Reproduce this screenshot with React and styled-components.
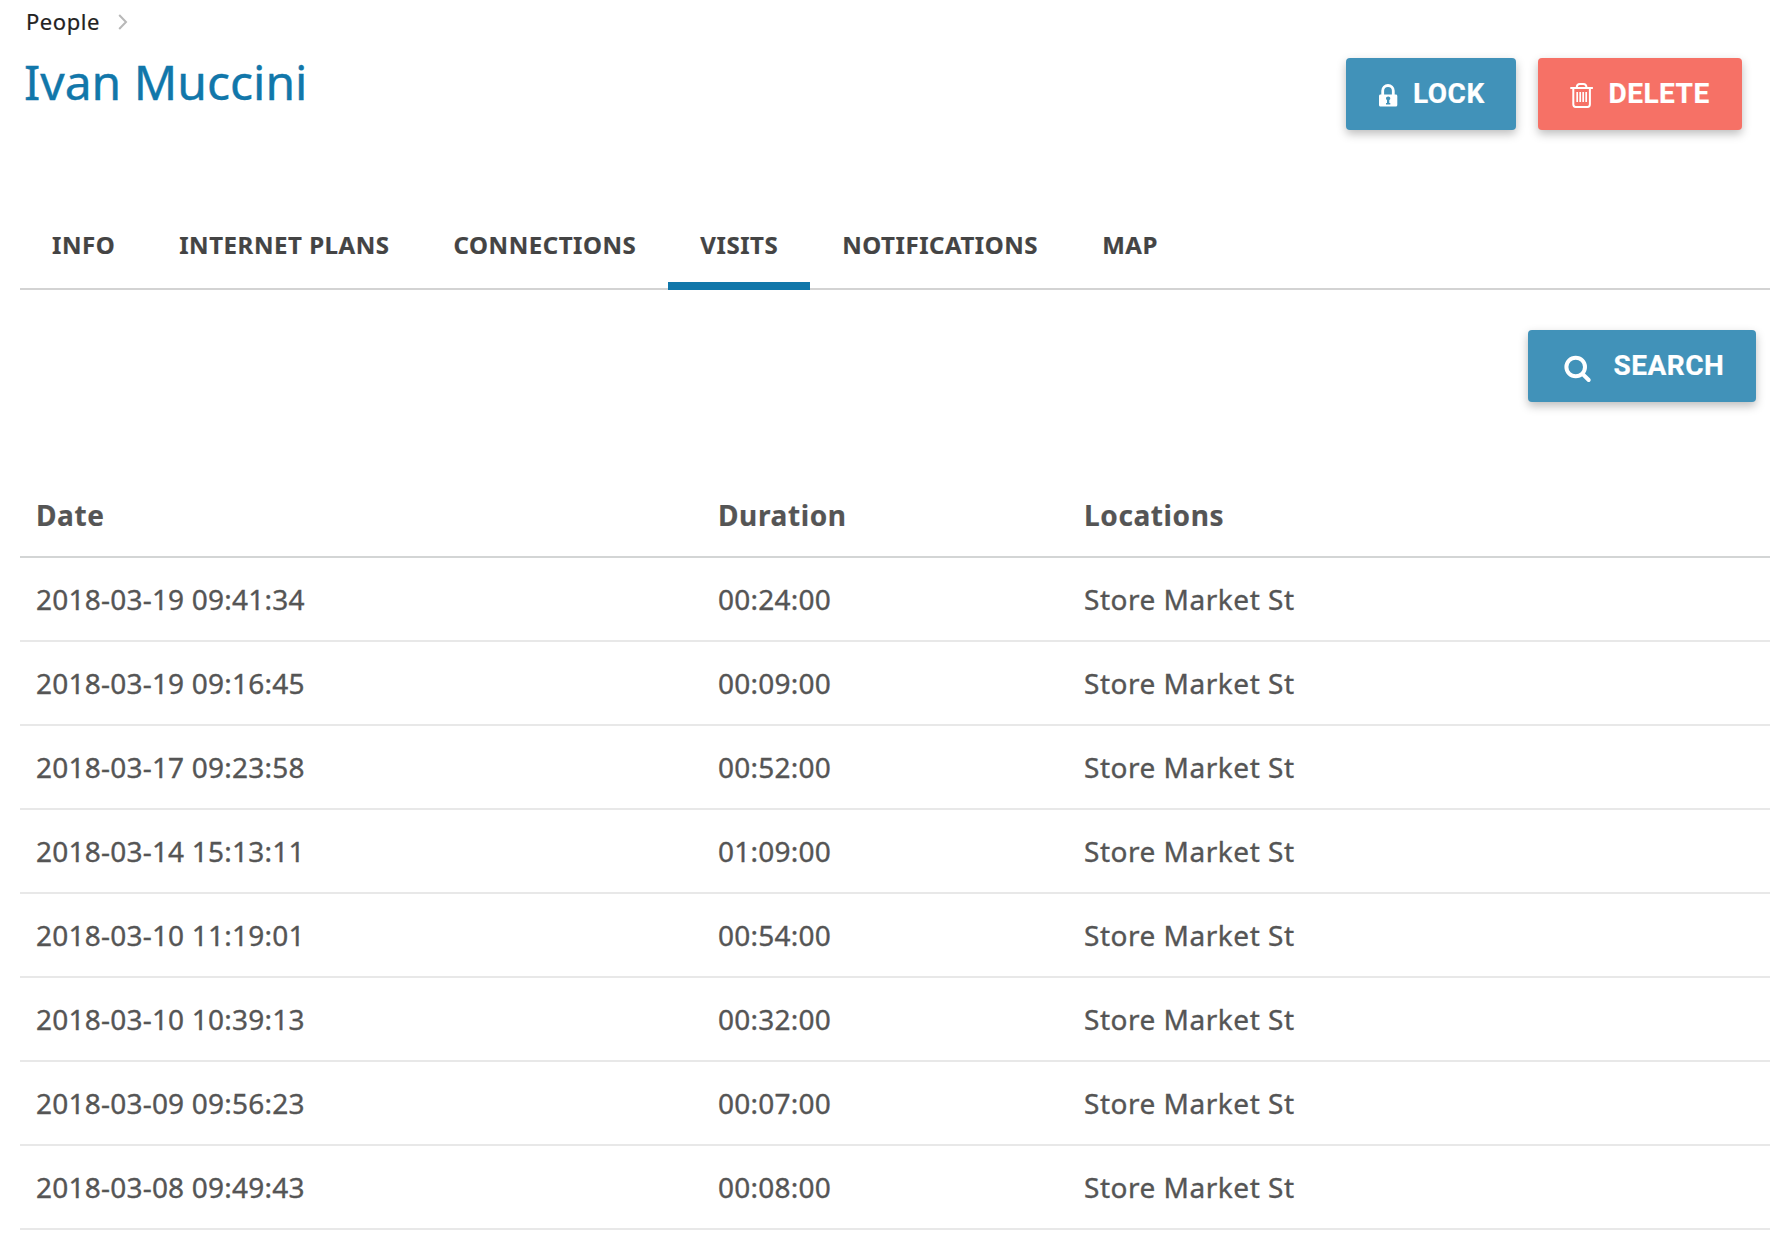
import React from "react";
import styled, { createGlobalStyle } from "styled-components";

const GlobalStyle = createGlobalStyle`
  *, *::before, *::after { box-sizing: border-box; }
  body {
    margin: 0;
    background: #fff;
    color: #555;
    font-family: "Noto Sans", "Open Sans", sans-serif;
  }
`;

const Page = styled.main`
  width: 1788px;
  height: 1240px;
  padding: 0 18px 0 20px;
  overflow: hidden;
  background: #fff;
`;

const Header = styled.header`
  display: flex;
  justify-content: space-between;
  align-items: flex-start;
  height: 206px;
  padding: 0 28px 0 4px;
`;

const Breadcrumb = styled.nav`
  display: flex;
  align-items: center;
  gap: 18px;
  height: 44px;
`;

const Crumb = styled.a`
  color: #222;
  font-size: 22px;
  line-height: 42px;
  height: 44px;
  letter-spacing: 0.55px;
  padding-left: 2px;
  text-decoration: none;
  -webkit-text-stroke: 0.2px;
`;

const Title = styled.h1`
  margin: 4px 0 0;
  color: #1177aa;
  font-size: 48px;
  font-weight: 400;
  line-height: 68px;
  -webkit-text-stroke: 0.4px;
`;

const Actions = styled.div`
  display: flex;
  gap: 22px;
  padding-top: 58px;
`;

const Button = styled.button`
  display: flex;
  align-items: center;
  gap: ${(p) => p.$gap}px;
  width: ${(p) => p.$width}px;
  height: 72px;
  padding: 0 0 0 ${(p) => p.$inset || 32}px;
  border: 0;
  border-radius: 4px;
  background: ${(p) => (p.$danger ? "#f67166" : "#4192b9")};
  box-shadow: 0 4px 10px rgba(0, 0, 0, 0.26);
  color: #fff;
  font: 700 28px/72px Roboto, sans-serif;
  letter-spacing: 0.5px;
  white-space: nowrap;
  -webkit-text-stroke: 0.2px;

  svg { flex: none; display: block; }
`;

const Tabs = styled.div`
  display: flex;
  height: 84px;
  border-bottom: 2px solid #d3d3d3;
`;

const Tab = styled.a`
  height: 84px;
  padding: 0 32px;
  border-bottom: 8px solid ${(p) => (p.$active ? "#1177aa" : "transparent")};
  color: #444;
  font-size: 24px;
  font-weight: 700;
  line-height: 77px;
  letter-spacing: 0.553px;
  white-space: nowrap;
  -webkit-text-stroke: 0.2px;
`;

const Toolbar = styled.div`
  display: flex;
  justify-content: flex-end;
  height: 184px;
  padding: 40px 14px 0 0;
`;

const Table = styled.table`
  width: 1750px;
  table-layout: fixed;
  border-collapse: separate;
  border-spacing: 0;
`;

const HeadCell = styled.th`
  width: ${(p) => p.$width}px;
  height: 84px;
  padding: 0 16px;
  border-bottom: 2px solid #d3d5d5;
  font-size: 28px;
  font-weight: 700;
  line-height: 82px;
  letter-spacing: 0.62px;
  text-align: left;
  -webkit-text-stroke: 0.2px;
`;

const Cell = styled.td`
  height: 84px;
  padding: 0 16px;
  border-bottom: 2px solid #e8e8e8;
  font-size: 28px;
  line-height: 82px;
  letter-spacing: ${(p) => (p.$numeric ? 0.22 : 0.52)}px;
  white-space: nowrap;
  -webkit-text-stroke: 0.35px;
`;

const Chevron = () => (
  <svg width="10" height="16" viewBox="0 0 10 16" fill="none" stroke="#b8b8b8" strokeWidth="2">
    <path d="M1.2 1 8 8 1.2 15" />
  </svg>
);

const LockIcon = () => (
  <svg width="20" height="24" viewBox="0 0 20 24" fill="none">
    <path d="M4.7 13V7.8a5.3 5.3 0 0 1 10.6 0V13" stroke="#fff" strokeWidth="2.8" />
    <path
      fill="#fff"
      fillRule="evenodd"
      d="M2.5 11.500h15.300c.9 0 1.500.6 1.500 1.500v9c0 .9-.6 1.500-1.500 1.500H2.500C1.600 23.500 1 22.900 1 22v-9c0-.9.600-1.500 1.500-1.500zM8 15.400c0 .8.400 1.300 1 1.600v3H8v1.600h4.300V20h-1v-3c.600-.300 1-.800 1-1.600 0-1-.900-1.800-2.100-1.800S8 14.400 8 15.400z"
    />
  </svg>
);

const TrashIcon = () => (
  <svg width="24" height="26" viewBox="0 0 24 26" fill="none" stroke="#fff" strokeWidth="2">
    <path d="M.3 6h22.600" />
    <path d="M6.700 6C6.700 3.600 8 2.100 9.900 2.100h3.400c1.900 0 3.200 1.500 3.200 3.900" />
    <path d="M3.300 6v16.200c0 1.500.9 2.700 2.400 2.700h11.800c1.500 0 2.400-1.200 2.400-2.700V6" />
    <path d="M7.200 10v10M10.200 10v10M13.200 10v10M16.200 10v10" strokeWidth="1.700" />
  </svg>
);

const SearchIcon = () => (
  <svg width="28" height="28" viewBox="0 0 28 28" fill="none" stroke="#fff" strokeWidth="4">
    <circle cx="11.700" cy="12" r="9.300" />
    <path d="M18.500 18.800 24.700 25" strokeLinecap="round" />
  </svg>
);

const Glyph = styled.span`
  display: flex;
  padding-top: ${(p) => p.$drop}px;
`;

const tabs = ["INFO", "INTERNET PLANS", "CONNECTIONS", "VISITS", "NOTIFICATIONS", "MAP"];

const visits = [
  ["2018-03-19 09:41:34", "00:24:00", "Store Market St"],
  ["2018-03-19 09:16:45", "00:09:00", "Store Market St"],
  ["2018-03-17 09:23:58", "00:52:00", "Store Market St"],
  ["2018-03-14 15:13:11", "01:09:00", "Store Market St"],
  ["2018-03-10 11:19:01", "00:54:00", "Store Market St"],
  ["2018-03-10 10:39:13", "00:32:00", "Store Market St"],
  ["2018-03-09 09:56:23", "00:07:00", "Store Market St"],
  ["2018-03-08 09:49:43", "00:08:00", "Store Market St"],
];

export default function App() {
  return (
    <Page>
      <GlobalStyle />
      <Header>
        <div>
          <Breadcrumb>
            <Crumb>People</Crumb>
            <Chevron />
          </Breadcrumb>
          <Title>Ivan Muccini</Title>
        </div>
        <Actions>
          <Button $width={170} $gap={15}>
            <Glyph $drop={2}><LockIcon /></Glyph>
            LOCK
          </Button>
          <Button $width={204} $gap={14.5} $danger>
            <Glyph $drop={2}><TrashIcon /></Glyph>
            DELETE
          </Button>
        </Actions>
      </Header>
      <Tabs>
        {tabs.map((name) => (
          <Tab key={name} $active={name === "VISITS"}>{name}</Tab>
        ))}
      </Tabs>
      <Toolbar>
        <Button $width={228} $gap={21.5} $inset={36}>
          <Glyph $drop={6}><SearchIcon /></Glyph>
          SEARCH
        </Button>
      </Toolbar>
      <Table>
        <thead>
          <tr>
            <HeadCell $width={682}>Date</HeadCell>
            <HeadCell $width={366}>Duration</HeadCell>
            <HeadCell $width={702}>Locations</HeadCell>
          </tr>
        </thead>
        <tbody>
          {visits.map(([date, duration, location]) => (
            <tr key={date}>
              <Cell $numeric>{date}</Cell>
              <Cell $numeric>{duration}</Cell>
              <Cell>{location}</Cell>
            </tr>
          ))}
        </tbody>
      </Table>
    </Page>
  );
}
